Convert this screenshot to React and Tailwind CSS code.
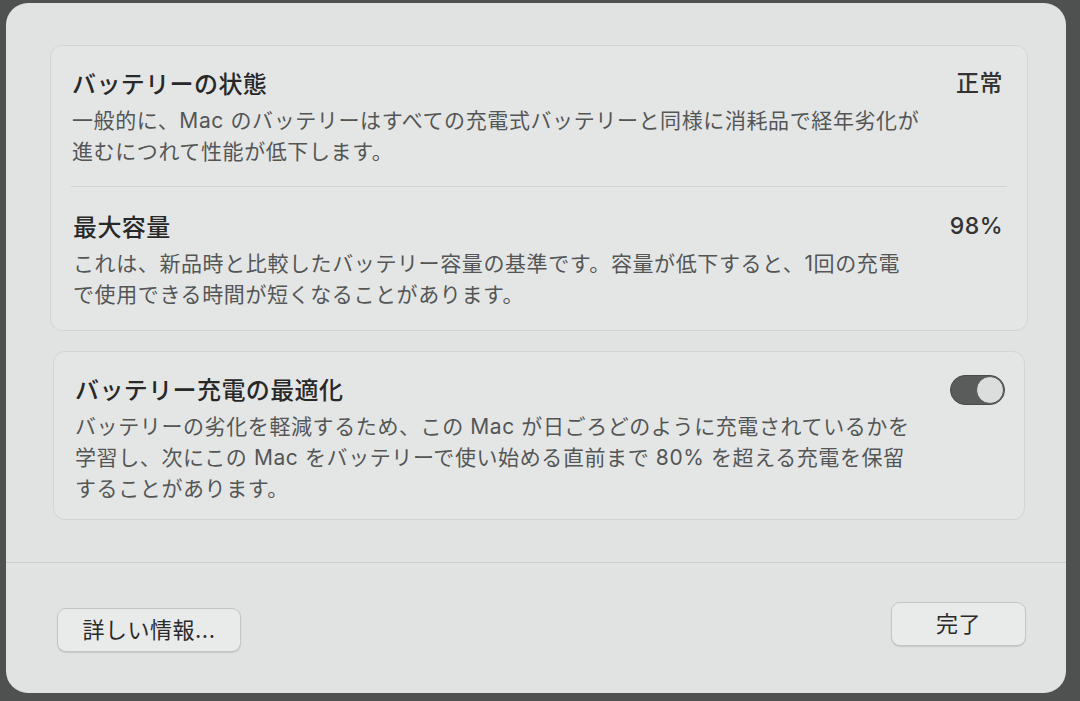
import React, { useState } from 'react';

const font = { fontFamily: '"Inter", "Noto Sans CJK JP", sans-serif' };

// Row inside a settings card: title + description on the left, control on the right
const Row = ({ title, lines, right, className }) => (
  <div className={`flex items-start justify-between ${className || ''}`}>
    <div>
      <div className="text-[24px] leading-[32px] tracking-[0.4px] font-medium text-[#282828]">{title}</div>
      <div className="mt-[4px] text-[21px] leading-[31px] tracking-[0.6px] text-[#545656] whitespace-nowrap">
        {lines.map((l, i) => (
          <div key={i}>{l}</div>
        ))}
      </div>
    </div>
    {right}
  </div>
);

const Value = ({ children }) => (
  <div className="text-[23px] leading-[32px] tracking-[0.5px] font-medium text-[#333] mt-[-2px]">{children}</div>
);

const Toggle = ({ on, onChange }) => (
  <button
    onClick={() => onChange(!on)}
    className={`relative w-[55px] h-[30px] rounded-full border border-[#4a4a4a] ${on ? 'bg-[#5a5b5b]' : 'bg-[#c8caca]'}`}
  >
    <span
      className={`absolute top-[0px] w-[28px] h-[28px] rounded-full bg-[#dcdede] border border-[#555] ${on ? 'right-[0px]' : 'left-[0px]'}`}
    />
  </button>
);

const MacButton = ({ children, className }) => (
  <button
    className={`h-[44px] rounded-[9px] border border-[#c4c6c6] bg-[#e9ebeb] shadow-[0_1px_1px_rgba(0,0,0,0.12)] text-[22px] tracking-[0.5px] text-[#2a2a2a] ${className || ''}`}
  >
    {children}
  </button>
);

export default function App() {
  const [optimized, setOptimized] = useState(true);

  return (
    <div style={font} className="h-[701px] overflow-hidden bg-[#4f5050] pt-[3px] pl-[6px] pr-[14px]">
      <div className="h-[690px] rounded-[22px] bg-[#e1e3e3] flex flex-col">
        <div className="pt-[42px] pl-[44px] pr-[38px]">
          <div className="rounded-[12px] border border-[#d3d5d5] bg-[#e4e6e6]">
            <Row
              className="pl-[21px] pr-[24px] pt-[23px] pb-[19px]"
              title="バッテリーの状態"
              lines={[
                '一般的に、Mac のバッテリーはすべての充電式バッテリーと同様に消耗品で経年劣化が',
                '進むにつれて性能が低下します。',
              ]}
              right={<Value>正常</Value>}
            />
            <div className="mx-[20px] border-t border-[#d2d4d4]" />
            <Row
              className="pl-[22px] pr-[24px] pt-[25px] pb-[20px]"
              title="最大容量"
              lines={[
                'これは、新品時と比較したバッテリー容量の基準です。容量が低下すると、1回の充電',
                'で使用できる時間が短くなることがあります。',
              ]}
              right={<Value>98%</Value>}
            />
          </div>

          <div className="mt-[20px] mx-[3px] rounded-[12px] border border-[#d3d5d5] bg-[#e4e6e6] pl-[21px] pr-[19px] pt-[23px] pb-[15px]">
            <Row
              title="バッテリー充電の最適化"
              lines={[
                'バッテリーの劣化を軽減するため、この Mac が日ごろどのように充電されているかを',
                '学習し、次にこの Mac をバッテリーで使い始める直前まで 80% を超える充電を保留',
                'することがあります。',
              ]}
              right={<Toggle on={optimized} onChange={setOptimized} />}
            />
          </div>
        </div>

        <div className="mt-[42px] border-t border-[#cdcfcf]" />

        <div className="flex items-start justify-between pl-[51px] pr-[40px] pt-[39px]">
          <MacButton className="w-[184px] mt-[6px]">詳しい情報...</MacButton>
          <MacButton className="w-[135px]">完了</MacButton>
        </div>
      </div>
    </div>
  );
}
